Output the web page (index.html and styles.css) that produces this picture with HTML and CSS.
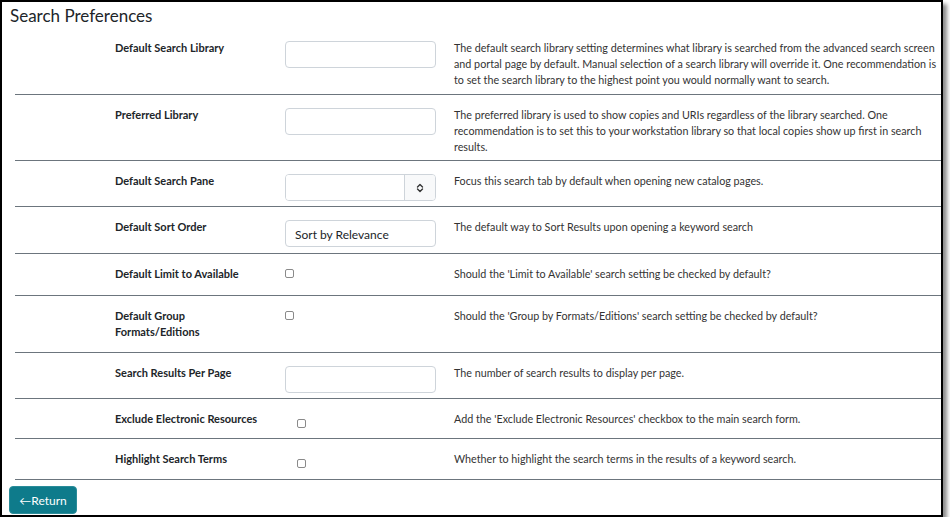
FILE: index.html
```html
<!DOCTYPE html>
<html>
<head>
<meta charset="utf-8">
<link rel="stylesheet" href="styles.css">
</head>
<body>
<div class="frame">
  <h1 class="title">Search Preferences</h1>
  <div class="prefs">
    <div class="row first">
      <div class="label">Default Search Library</div>
      <div class="control"><input class="text-input" type="text"></div>
      <div class="desc">The default search library setting determines what library is searched from the advanced search screen and portal page by default. Manual selection of a search library will override it. One recommendation is to set the search library to the highest point you would normally want to search.</div>
    </div>
    <div class="row">
      <div class="label">Preferred Library</div>
      <div class="control"><input class="text-input" type="text"></div>
      <div class="desc">The preferred library is used to show copies and URIs regardless of the library searched. One recommendation is to set this to your workstation library so that local copies show up first in search results.</div>
    </div>
    <div class="row">
      <div class="label">Default Search Pane</div>
      <div class="control">
        <div class="select">
          <div class="select-value"></div>
          <div class="select-btn">
            <svg width="8" height="10" viewBox="0 0 8 10"><path d="M1.5 4 L4 1.5 L6.5 4 M1.5 6 L4 8.5 L6.5 6" fill="none" stroke="#333" stroke-width="1.4" stroke-linecap="round" stroke-linejoin="round"/></svg>
          </div>
        </div>
      </div>
      <div class="desc">Focus this search tab by default when opening new catalog pages.</div>
    </div>
    <div class="row">
      <div class="label">Default Sort Order</div>
      <div class="control"><div class="text-input value">Sort by Relevance</div></div>
      <div class="desc">The default way to Sort Results upon opening a keyword search</div>
    </div>
    <div class="row">
      <div class="label">Default Limit to Available</div>
      <div class="control"><span class="check"></span></div>
      <div class="desc">Should the 'Limit to Available' search setting be checked by default?</div>
    </div>
    <div class="row">
      <div class="label two-line">Default Group<br>Formats/Editions</div>
      <div class="control"><span class="check"></span></div>
      <div class="desc">Should the 'Group by Formats/Editions' search setting be checked by default?</div>
    </div>
    <div class="row">
      <div class="label">Search Results Per Page</div>
      <div class="control"><input class="text-input" type="text"></div>
      <div class="desc">The number of search results to display per page.</div>
    </div>
    <div class="row compact">
      <div class="label">Exclude Electronic Resources</div>
      <div class="control"><span class="check check-low"></span></div>
      <div class="desc">Add the 'Exclude Electronic Resources' checkbox to the main search form.</div>
    </div>
    <div class="row compact last">
      <div class="label">Highlight Search Terms</div>
      <div class="control"><span class="check check-low"></span></div>
      <div class="desc">Whether to highlight the search terms in the results of a keyword search.</div>
    </div>
  </div>
  <div class="actions">
    <button class="return-btn" type="button">&larr;Return</button>
  </div>
</div>
</body>
</html>
```
FILE: styles.css
```css
html, body {
  margin: 0;
  padding: 0;
  background: #fff;
}
body {
  font-family: Lato, "Open Sans", sans-serif;
  color: #222;
}
.frame {
  width: 939px;
  height: 513px;
  border: 2px solid #000;
  box-shadow: 4px 4px 4px rgba(0, 0, 0, 0.45);
  background: #fff;
  display: flex;
  flex-direction: column;
}
.title {
  margin: 2px 0 1px 8px;
  font-size: 17px;
  line-height: 23px;
  font-weight: 400;
  color: #212529;
}
.prefs {
  margin-left: 13px;
}
.row {
  display: grid;
  grid-template-columns: 100px 170px 169px 1fr;
  padding: 12px 4px 5px 0;
  border-bottom: 1px solid #6c757d;
}
.row.first {
  padding-bottom: 6px;
}
.row.compact {
  padding-bottom: 3px;
}
.row.compact.last {
  padding-bottom: 4px;
}
.label {
  grid-column: 2;
  font-size: 11px;
  font-weight: 700;
  line-height: 16px;
  padding-bottom: 8px;
  color: #212529;
}
.label.two-line {
  padding-bottom: 7px;
}
.control {
  grid-column: 3;
}
.desc {
  grid-column: 4;
  font-size: 10.75px;
  line-height: 16px;
  color: #333;
}
.text-input {
  box-sizing: border-box;
  display: block;
  width: 151px;
  height: 27px;
  margin-top: 1px;
  border: 1px solid #ced4da;
  border-radius: 4px;
  background: #fff;
  padding: 0 9px;
  font-family: inherit;
  font-size: 12px;
  color: #212529;
}
.text-input.value {
  display: flex;
  align-items: center;
  margin-top: 1px;
  margin-bottom: 1px;
  padding-top: 2px;
}
.select {
  box-sizing: border-box;
  display: flex;
  width: 151px;
  height: 27px;
  margin-top: 1px;
  border: 1px solid #ced4da;
  border-radius: 4px;
  overflow: hidden;
}
.select-value {
  flex: 1;
  background: #fff;
}
.select-btn {
  width: 30px;
  border-left: 1px solid #ced4da;
  background: #f8f9fa;
  display: flex;
  align-items: center;
  justify-content: center;
}
.check {
  display: block;
  box-sizing: border-box;
  width: 9px;
  height: 9px;
  margin-top: 3px;
  border: 1px solid #8a8a8a;
  border-radius: 2px;
  background: #fff;
}
.check.check-low {
  margin-left: 12px;
  margin-top: 8px;
}
.actions {
  padding: 6px 0 0 7px;
}
.return-btn {
  width: 68px;
  height: 28px;
  border: 1px solid #2a8c99;
  border-radius: 4px;
  background: #0e7b8b;
  color: #fff;
  font-family: inherit;
  font-size: 12px;
  padding: 0;
  cursor: pointer;
}
```
